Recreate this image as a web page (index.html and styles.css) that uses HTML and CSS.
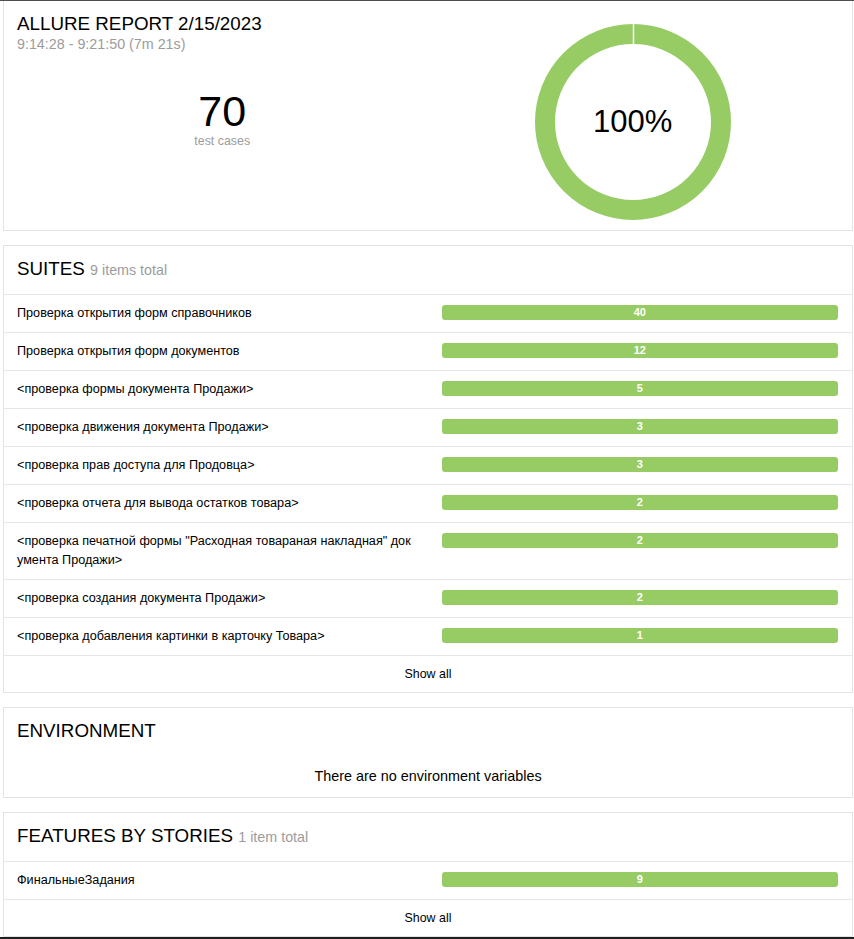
FILE: index.html
```html
<!DOCTYPE html>
<html lang="en">
<head>
<meta charset="utf-8">
<title>Allure Report</title>
<link rel="stylesheet" href="styles.css">
</head>
<body>
<div class="page">
  <section class="card card--summary">
    <div class="summary__left">
      <h1 class="summary__title">ALLURE REPORT 2/15/2023</h1>
      <div class="summary__time">9:14:28 - 9:21:50 (7m 21s)</div>
      <div class="summary__count">70</div>
      <div class="summary__label">test cases</div>
    </div>
    <div class="summary__right">
      <div class="donut">
        <svg width="200" height="200" viewBox="0 0 200 200">
          <circle cx="100" cy="100" r="88" fill="none" stroke="#97cc64" stroke-width="20"/>
          <line x1="100.5" y1="1" x2="100.5" y2="23" stroke="#fff" stroke-width="1.5"/>
        </svg>
        <div class="donut__value">100%</div>
      </div>
    </div>
  </section>

  <section class="card">
    <div class="card__header"><span class="card__title">SUITES</span> <span class="card__sub">9 items total</span></div>
    <div class="row"><div class="row__name">Проверка открытия форм справочников</div><div class="bar">40</div></div>
    <div class="row"><div class="row__name">Проверка открытия форм документов</div><div class="bar">12</div></div>
    <div class="row"><div class="row__name">&lt;проверка формы документа Продажи&gt;</div><div class="bar">5</div></div>
    <div class="row"><div class="row__name">&lt;проверка движения документа Продажи&gt;</div><div class="bar">3</div></div>
    <div class="row"><div class="row__name">&lt;проверка прав доступа для Продовца&gt;</div><div class="bar">3</div></div>
    <div class="row"><div class="row__name">&lt;проверка отчета для вывода остатков товара&gt;</div><div class="bar">2</div></div>
    <div class="row"><div class="row__name">&lt;проверка печатной формы "Расходная товараная накладная" документа Продажи&gt;</div><div class="bar">2</div></div>
    <div class="row"><div class="row__name">&lt;проверка создания документа Продажи&gt;</div><div class="bar">2</div></div>
    <div class="row"><div class="row__name">&lt;проверка добавления картинки в карточку Товара&gt;</div><div class="bar">1</div></div>
    <div class="showall">Show all</div>
  </section>

  <section class="card">
    <div class="card__header card__header--plain"><span class="card__title">ENVIRONMENT</span></div>
    <div class="empty">There are no environment variables</div>
  </section>

  <section class="card">
    <div class="card__header"><span class="card__title">FEATURES BY STORIES</span> <span class="card__sub">1 item total</span></div>
    <div class="row"><div class="row__name">ФинальныеЗадания</div><div class="bar">9</div></div>
    <div class="showall">Show all</div>
  </section>
</div>
</body>
</html>
```

FILE: styles.css
```css
html, body {
  margin: 0;
  padding: 0;
  background: #fff;
}

body {
  font-family: "Liberation Sans", Arial, sans-serif;
  color: #000;
}

.page {
  height: 939px;
  box-sizing: border-box;
  border-top: 1px solid #4f4f4f;
  border-bottom: 2px solid #1f1f1f;
  padding: 0 1px 0 3px;
  display: flex;
  flex-direction: column;
  gap: 14px;
  overflow: hidden;
}

.card {
  border: 1px solid #e3e3e3;
  background: #fff;
  flex: 0 0 auto;
}

/* summary */
.card--summary {
  border-top: 0;
  height: 229px;
  box-sizing: content-box;
  display: grid;
  grid-template-columns: 1fr 1fr;
  padding: 0 14px 0 13px;
}

.summary__left {
  padding-top: 12px;
  display: flex;
  flex-direction: column;
}

.summary__title {
  margin: 0;
  font-size: 18.8px;
  line-height: 22px;
  font-weight: normal;
}

.summary__time {
  font-size: 14.3px;
  line-height: 18px;
  color: #9c9c9c;
}

.summary__count {
  margin-top: 37px;
  font-size: 43px;
  line-height: 43px;
  text-align: center;
}

.summary__label {
  margin-top: 1px;
  font-size: 12.4px;
  line-height: 15px;
  color: #9c9c9c;
  text-align: center;
}

.summary__right {
  display: flex;
  justify-content: center;
  padding-top: 21px;
}

.donut {
  position: relative;
  width: 200px;
  height: 200px;
}

.donut svg {
  display: block;
}

.donut__value {
  position: absolute;
  inset: 0;
  display: flex;
  align-items: center;
  justify-content: center;
  font-size: 31px;
}

/* generic card */
.card__header {
  padding: 12px 14px 14px 13px;
  font-size: 18.8px;
  line-height: 22px;
  height: 22px;
  border-bottom: 1px solid #e6e6e6;
}

.card__header--plain {
  border-bottom: 0;
  padding-bottom: 13px;
}

.card__title {
  font-size: 18.8px;
}

.card__sub {
  font-size: 14.3px;
  line-height: 16px;
  color: #9c9c9c;
}

.row {
  display: grid;
  grid-template-columns: 1fr 1fr;
  column-gap: 28px;
  align-items: start;
  padding: 9px 14px 9px 13px;
  border-bottom: 1px solid #e6e6e6;
}

.row__name {
  font-size: 12.65px;
  line-height: 19px;
  word-break: break-all;
}

.bar {
  margin-top: 1px;
  height: 15px;
  line-height: 15px;
  background: #97cc64;
  border-radius: 3px;
  color: #fff;
  font-weight: bold;
  font-size: 11px;
  text-align: center;
}

.showall {
  text-align: center;
  font-size: 12.4px;
  line-height: 36px;
}

.empty {
  text-align: center;
  font-size: 14.4px;
  line-height: 20px;
  padding: 11px 0 11px;
}
```
